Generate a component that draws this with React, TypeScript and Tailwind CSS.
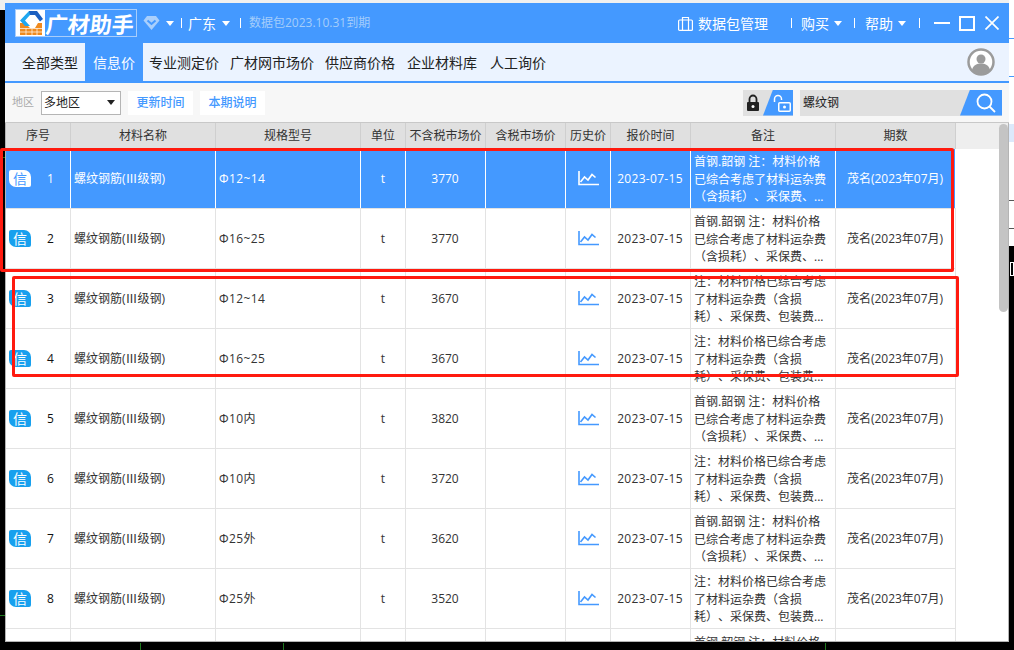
import * as React from "react";

interface Row {
  no: number;
  spec: string;
  price: string;
  note: "a" | "b";
}

const rows: Row[] = [
  { no: 1, spec: "Φ12~14", price: "3770", note: "a" },
  { no: 2, spec: "Φ16~25", price: "3770", note: "a" },
  { no: 3, spec: "Φ12~14", price: "3670", note: "b" },
  { no: 4, spec: "Φ16~25", price: "3670", note: "b" },
  { no: 5, spec: "Φ10内", price: "3820", note: "a" },
  { no: 6, spec: "Φ10内", price: "3720", note: "b" },
  { no: 7, spec: "Φ25外", price: "3620", note: "a" },
  { no: 8, spec: "Φ25外", price: "3520", note: "b" },
];

const headers = ["序号", "材料名称", "规格型号", "单位", "不含税市场价", "含税市场价", "历史价", "报价时间", "备注", "期数"];

const cols = "grid grid-cols-[65px_145px_145px_45px_80px_80px_45px_80px_145px_120px]";

const ChartIcon = ({ active }: { active: boolean }) => (
  <svg width="21" height="15" viewBox="0 0 21 15" fill="none" stroke={active ? "#ffffff" : "#4499ff"}>
    <path d="M1 0v13.500h20" strokeWidth="1.600" />
    <path d="M2.500 11l4-5 3.500 3 4-5.500 3.500 3" strokeWidth="1.600" />
  </svg>
);

const Caret = ({ className }: { className: string }) => (
  <span className={`w-0 h-0 border-x-[4px] border-x-transparent border-t-[5px] border-t-white ${className}`} />
);

const Sep = ({ className }: { className: string }) => <span className={`w-px h-[10px] bg-white ${className}`} />;

const Note = ({ kind }: { kind: "a" | "b" }) => {
  const lines =
    kind === "a"
      ? ["首钢.韶钢 注：材料价格", "已综合考虑了材料运杂费", "（含损耗）、采保费、..."]
      : ["注：材料价格已综合考虑", "了材料运杂费（含损", "耗）、采保费、包装费..."];
  return (
    <div className="w-full pl-[3px] leading-[17.400px]">
      {lines.map((l) => (
        <div key={l} className="whitespace-pre">
          {l}
        </div>
      ))}
    </div>
  );
};

export default function App() {
  return (
    <div className="relative w-[1014px] h-[650px] overflow-hidden bg-black font-['Open_Sans','Noto_Sans_CJK_SC',sans-serif] [text-spacing-trim:space-all] text-[12px] text-[#333]">
      {/* what lies behind the window */}
      <div className="absolute left-0 top-0 w-full h-[3px] bg-[#f0f0f0]" />
      <div className="absolute left-0 top-0 w-[5px] h-[10px] bg-[#f0f0f0]" />
      <div className="absolute right-0 top-0 w-[5px] h-[246px] bg-white" />
      <div className="absolute right-0 top-[38px] w-[5px] h-[1px] bg-[#4499ff]" />
      <div className="absolute right-0 top-[76px] w-[5px] h-[1px] bg-[#4499ff]" />
      <div className="absolute right-0 top-[124px] w-[5px] h-[18px] bg-[#dce9fb]" />
      <div className="absolute right-0 top-[200px] w-[5px] h-[1px] bg-[#555]" />
      <div className="absolute right-0 top-[228px] w-[5px] h-[1px] bg-[#555]" />
      <div className="absolute right-0 top-[262px] w-[4px] h-[14px] border border-white" />
      <div className="absolute left-0 top-[157px] w-[5px] h-px bg-[#1f7a1f]" />
      <div className="absolute left-0 top-[615px] w-[5px] h-px bg-[#1f7a1f]" />
      <div className="absolute left-[140px] top-[643px] w-px h-[7px] bg-[#1f7a1f]" />
      <div className="absolute left-[283px] top-[643px] w-px h-[7px] bg-[#1f7a1f]" />
      <div className="absolute left-[825px] top-[643px] w-px h-[7px] bg-[#1f7a1f]" />

      <div className="relative flex flex-col mt-[3px] ml-[5px] w-[1004px] h-[639px] overflow-hidden bg-white">
        {/* title bar */}
        <div className="flex items-center h-[40px] shrink-0 bg-[#4499ff] text-white pl-[10px] pr-[10px]">
          <div className="flex items-center h-[28px] w-[122px] border border-[#a8cdfb]">
            <div className="w-[29px] h-[26px] bg-white flex items-center justify-center shrink-0">
              <svg width="28" height="26" viewBox="0 0 28 26">
                <path d="M3 13h5l5 5h5l3-5h4v12H3z" fill="#f08a1d" />
                <path d="M3 18.500h22M3 22h22M9 18.500V25M15 18.500V25M20 18.500V25" stroke="#fff" strokeWidth="0.700" fill="none" />
                <path d="M12 1h8l6 8-3 2.500L18 5h-6z" fill="#1b5fc0" />
                <path d="M12 1L3 10.500 8 16h5L8 10.500 13 5z" fill="#1ea7f0" />
              </svg>
            </div>
            <span className="inline-block ml-[1px] -skew-x-6 text-[22px] font-bold leading-none whitespace-nowrap font-['Noto_Sans_CJK_SC']">广材助手</span>
          </div>
          <svg className="ml-[6px]" width="17" height="16" viewBox="0 0 17 16">
            <path d="M4 1h9l3.500 4.500L8.500 15 .5 5.500z" fill="#a9cffc" />
            <path d="M4.500 5.500l4 3.500 4-3.500" fill="none" stroke="#4499ff" strokeWidth="2" />
          </svg>
          <Caret className="ml-[6px]" />
          <Sep className="ml-[7px]" />
          <span className="ml-[6px] text-[14px]">广东</span>
          <Caret className="ml-[6px]" />
          <Sep className="ml-[10px]" />
          <span className="ml-[8px] text-[12px] text-[#a4cdfb]">数据包2023.10.31到期</span>
          <div className="ml-auto flex items-center">
            <svg width="15" height="15" viewBox="0 0 15 15" fill="none" stroke="#fff" strokeWidth="1.200">
              <rect x="0.600" y="4" width="13.800" height="10.400" rx="1" />
              <path d="M4.500 14V1.500h6V14" />
            </svg>
            <span className="ml-[5px] text-[14px]">数据包管理</span>
            <Sep className="ml-[23px]" />
            <span className="ml-[9px] text-[14px]">购买</span>
            <Caret className="ml-[5px]" />
            <Sep className="ml-[12px]" />
            <span className="ml-[10px] text-[14px]">帮助</span>
            <Caret className="ml-[5px]" />
            <Sep className="ml-[13px]" />
            <span className="ml-[14px] w-[16px] h-[2px] bg-white" />
            <span className="ml-[9px] w-[16px] h-[15px] border-2 border-white" />
            <svg className="ml-[10px]" width="14" height="14" viewBox="0 0 14 14" stroke="#fff" strokeWidth="1.700">
              <path d="M.5.5l13 13M13.500.5l-13 13" />
            </svg>
          </div>
        </div>

        {/* tabs */}
        <div className="flex items-stretch h-[40px] shrink-0 bg-[#ebf3ff] border-b-2 border-[#4499ff] pr-[14px] text-[14px] text-[#222]">
          <div className="w-[80px] flex items-center justify-end pr-[7px]">全部类型</div>
          <div className="w-[58px] flex items-center justify-center bg-[#4499ff] text-white">信息价</div>
          <div className="flex items-center ml-[6px]">专业测定价</div>
          <div className="flex items-center ml-[11px]">广材网市场价</div>
          <div className="flex items-center ml-[11px]">供应商价格</div>
          <div className="flex items-center ml-[12px]">企业材料库</div>
          <div className="flex items-center ml-[13px]">人工询价</div>
          <div className="ml-auto self-center">
            <svg width="28" height="28" viewBox="0 0 28 28">
              <circle cx="14" cy="14" r="12.500" fill="#fff" stroke="#9b9b9b" strokeWidth="2.500" />
              <circle cx="14" cy="11" r="4.500" fill="#9b9b9b" />
              <path d="M5 22c1-5 5-6.500 9-6.500s8 1.500 9 6.500a12 12 0 0 1-18 0z" fill="#9b9b9b" />
            </svg>
          </div>
        </div>

        {/* toolbar */}
        <div className="flex items-center h-[40px] shrink-0 bg-[#f7f7f7] border-b border-[#c8c8c8] pl-[7px] pr-[7px]">
          <span className="text-[11px] text-[#aaa]">地区</span>
          <div className="ml-[7px] flex items-center justify-between w-[80px] h-[24px] bg-white border border-[#b5b5b5] pl-[2px] pr-[5px] text-[#222]">
            多地区
            <span className="w-0 h-0 border-x-[4px] border-x-transparent border-t-[5px] border-t-[#222]" />
          </div>
          <button className="ml-[7px] w-[65px] h-[24px] bg-white font-medium text-[#4499ff]">更新时间</button>
          <button className="ml-[7px] w-[65px] h-[24px] bg-white font-medium text-[#4499ff]">本期说明</button>
          <div className="ml-auto flex items-center justify-between w-[50px] h-[26px] bg-[#e0e0e0]">
            <svg className="ml-[3px]" width="14" height="18" viewBox="0 0 14 18">
              <path d="M3.500 8V5a3.500 3.500 0 0 1 7 0v3" fill="none" stroke="#222" strokeWidth="1.800" />
              <rect x="1" y="8" width="12" height="9" rx="1" fill="#222" />
              <circle cx="7" cy="12.500" r="1.500" fill="#fff" />
            </svg>
            <div className="flex items-center justify-end w-[30px] h-full pr-[1px] bg-[#4499ff] [clip-path:polygon(10px_0,100%_0,100%_100%,0_100%)]">
              <svg width="19" height="18" viewBox="0 0 19 18">
                <path d="M1.500 8V5a3.500 3.500 0 0 1 7 0v1" fill="none" stroke="#fff" strokeWidth="1.500" />
                <rect x="5.750" y="8.750" width="11.500" height="8.500" rx="1" fill="none" stroke="#fff" strokeWidth="1.500" />
                <circle cx="11.500" cy="13" r="1.500" fill="#fff" />
              </svg>
            </div>
          </div>
          <div className="ml-[7px] flex items-center justify-between w-[202px] h-[26px] pl-[3px] text-[#222] bg-[#e0e0e0]">
            螺纹钢
            <div className="flex items-center justify-end w-[42px] h-full pr-[6px] bg-[#4499ff] [clip-path:polygon(10px_0,100%_0,100%_100%,0_100%)]">
              <svg width="20" height="20" viewBox="0 0 20 20" fill="none" stroke="#fff" strokeWidth="1.800">
                <circle cx="8.500" cy="8.500" r="7" />
                <path d="M13.500 13.500l5.500 5.500" />
              </svg>
            </div>
          </div>
        </div>

        {/* table */}
        <div className="relative flex-1 overflow-hidden bg-white border-x border-b border-[#b4b4b4]">
          <div className="h-[26px] bg-[#eeeeee]">
            <div className={`${cols} w-[950px]`}>
              {headers.map((h) => (
                <div key={h} className="flex items-center justify-center h-[26px] bg-[#e0e0e0] border-r border-[#cfcfcf] whitespace-nowrap">
                  {h}
                </div>
              ))}
            </div>
          </div>
          {[...rows, { no: 9, spec: "", price: "", note: "a" as const }].map((r) => {
            const active = r.no === 1;
            const last = r.no === 9;
            const cell = `flex items-center h-[59px] overflow-hidden border-r ${active ? "border-white" : "border-[#e3e3e3]"}`;
            return (
              <div key={r.no} className={`${cols} w-[950px] h-[60px] border-b border-[#e3e3e3] ${active ? "bg-[#4499ff] text-white" : ""}`}>
                <div className={`${cell} pl-[3px]`}>
                  {!last && (
                    <>
                      <span className={`flex items-center justify-center w-[22px] h-[17px] rounded-tr-[7px] rounded-bl-[7px] rounded-tl-[2px] rounded-br-[2px] text-[14px] leading-none ${active ? "bg-white text-[#4499ff]" : "bg-[#17a0ee] text-white"}`}>
                        信
                      </span>
                      <span className={`ml-[16px] ${active ? "" : "text-[#111]"}`}>{r.no}</span>
                    </>
                  )}
                </div>
                <div className={`${cell} pl-[3px]`}>{!last && "螺纹钢筋(Ⅲ级钢)"}</div>
                <div className={`${cell} pl-[3px] tracking-[0.400px]`}>{r.spec}</div>
                <div className={`${cell} justify-center`}>{!last && "t"}</div>
                <div className={`${cell} justify-center pr-[1px]`}>{r.price}</div>
                <div className={cell} />
                <div className={`${cell} justify-center`}>{!last && <ChartIcon active={active} />}</div>
                <div className={`${cell} justify-center pr-[1px] tracking-[0.300px]`}>{!last && "2023-07-15"}</div>
                <div className={`${cell} ${last ? "items-start pt-[5px]" : "pt-[2px]"}`}>
                  <Note kind={r.note} />
                </div>
                <div className={`${cell} justify-center pr-[1px] whitespace-nowrap`}>{!last && "茂名(2023年07月)"}</div>
              </div>
            );
          })}
          <div className="absolute right-0 top-[1px] w-[9px] h-[188px] rounded-full bg-[#c4c4c4]" />
        </div>
      </div>

      {/* red annotation boxes */}
      <div className="absolute left-0 top-[148px] w-[954px] h-[124px] border-[3px] border-[#ff1a0f] rounded-[2px]" />
      <div className="absolute left-[12px] top-[276px] w-[947px] h-[101px] border-[3px] border-[#ff1a0f] rounded-[2px]" />
    </div>
  );
}
